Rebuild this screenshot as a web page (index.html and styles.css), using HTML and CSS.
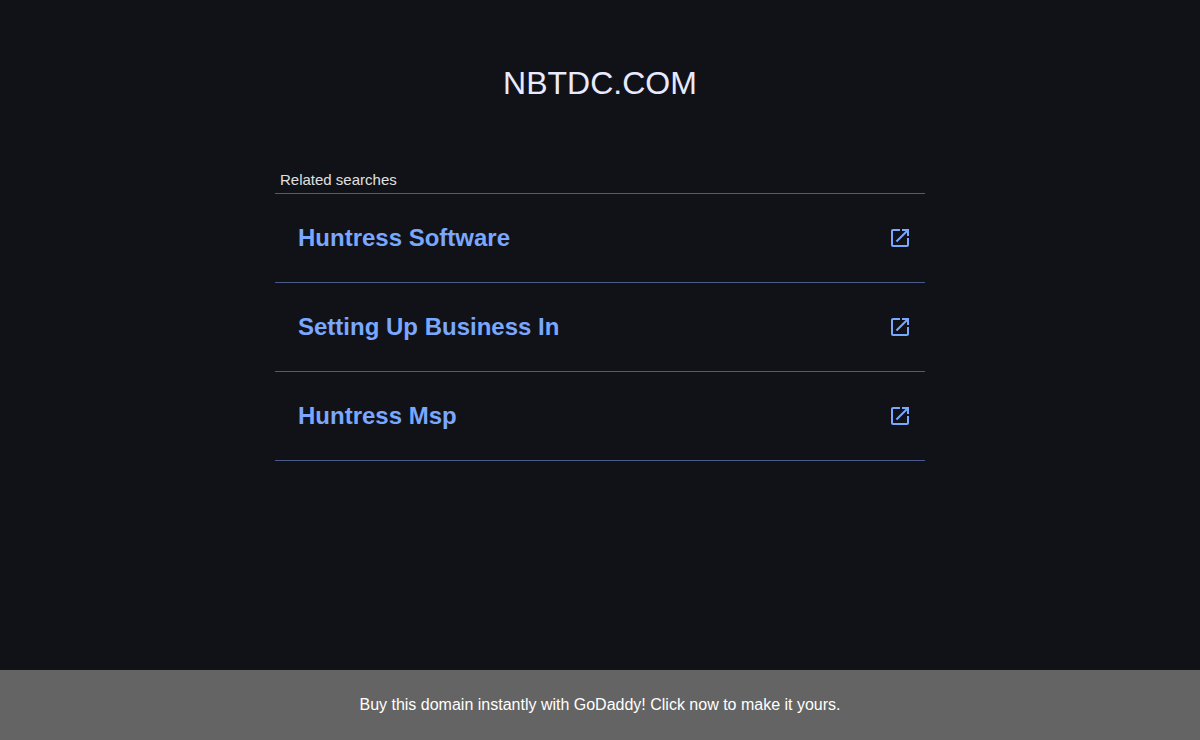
FILE: index.html
```html
<!DOCTYPE html>
<html lang="en">
<head>
    <meta charset="UTF-8">
    <title>nbtdc.com</title>
    <meta name="viewport" content="width=device-width, initial-scale=1.0">
    <link rel="stylesheet" href="styles.css">
</head>
<body>
    <main class="content">
        <h1 class="domain">NBTDC.COM</h1>

        <section class="searches">
            <h2 class="searches-title">Related searches</h2>
            <ul class="search-list">
                <li>
                    <a class="search-link" href="#">
                        <span>Huntress Software</span>
                        <svg class="open-icon" viewBox="0 0 24 24" aria-hidden="true"><path d="M19 19H5V5h7V3H5c-1.11 0-2 .9-2 2v14c0 1.1.89 2 2 2h14c1.1 0 2-.9 2-2v-7h-2v7zM14 3v2h3.59l-9.83 9.83 1.41 1.41L19 6.41V10h2V3h-7z"/></svg>
                    </a>
                </li>
                <li>
                    <a class="search-link" href="#">
                        <span>Setting Up Business In</span>
                        <svg class="open-icon" viewBox="0 0 24 24" aria-hidden="true"><path d="M19 19H5V5h7V3H5c-1.11 0-2 .9-2 2v14c0 1.1.89 2 2 2h14c1.1 0 2-.9 2-2v-7h-2v7zM14 3v2h3.59l-9.83 9.83 1.41 1.41L19 6.41V10h2V3h-7z"/></svg>
                    </a>
                </li>
                <li>
                    <a class="search-link" href="#">
                        <span>Huntress Msp</span>
                        <svg class="open-icon" viewBox="0 0 24 24" aria-hidden="true"><path d="M19 19H5V5h7V3H5c-1.11 0-2 .9-2 2v14c0 1.1.89 2 2 2h14c1.1 0 2-.9 2-2v-7h-2v7zM14 3v2h3.59l-9.83 9.83 1.41 1.41L19 6.41V10h2V3h-7z"/></svg>
                    </a>
                </li>
            </ul>
        </section>
    </main>

    <footer class="buy-bar">
        <a href="#">Buy this domain instantly with GoDaddy! Click now to make it yours.</a>
    </footer>
</body>
</html>
```
FILE: styles.css
```css
body {
    margin: 0;
    min-height: 100vh;
    display: flex;
    flex-direction: column;
    background-color: #101217;
    font-family: Arial, "Liberation Sans", sans-serif;
}
.content {
    flex: 1;
    padding: 64px 16px 32px;
}
.domain {
    margin: 0;
    text-align: center;
    font-size: 32px;
    font-weight: normal;
    line-height: 38px;
    color: #e8eaff;
}

.searches {
    max-width: 650px;
    margin: 68px auto 0;
}
.searches-title {
    margin: 0;
    padding: 0 5px 3px;
    font-size: 15px;
    font-weight: normal;
    line-height: 20px;
    color: #e0e0e0;
    border-bottom: 1px solid #4a5c88;
}
.search-list {
    margin: 0;
    padding: 0;
    list-style: none;
}
.search-link {
    display: flex;
    align-items: center;
    justify-content: space-between;
    padding: 30px 13px 30px 23px;
    font-size: 24px;
    font-weight: bold;
    line-height: 28px;
    color: #7aa7ff;
    text-decoration: none;
    border-bottom: 1px solid #4a5c88;
}
.search-link:hover {
    text-decoration: underline;
}
.open-icon {
    width: 24px;
    height: 24px;
    fill: currentColor;
}

.buy-bar {
    padding: 24px 16px;
    background-color: #646464;
    text-align: center;
    font-size: 16px;
    line-height: 22px;
}
.buy-bar a {
    color: #fff;
    text-decoration: none;
}
```
